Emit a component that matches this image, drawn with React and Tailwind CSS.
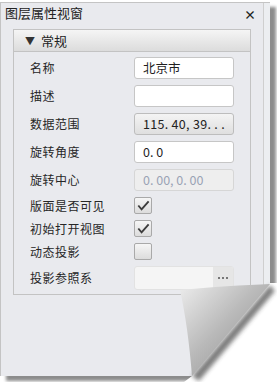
import React from 'react';

const font = "font-['Microsoft_YaHei','Noto_Sans_CJK_SC','Noto_Sans',sans-serif]";

// checkbox tick
const Tick = () => (
  <svg viewBox="0 0 17 17" className="w-[17px] h-[17px]">
    <path d="M3.5 8.5 L7 12.5 L14.5 4" fill="none" stroke="#3d3d3d" strokeWidth="2" />
  </svg>
);

const CheckBox = ({ checked }) => (
  <div className="w-[18px] h-[17px] rounded-[2px] border border-[#a9a9a9] bg-gradient-to-b from-[#f6f6f6] to-[#dcdcdc] flex items-center justify-center">
    {checked && <Tick />}
  </div>
);

const Row = ({ label, className, children }) => (
  <div className={`flex items-center ${className}`}>
    <div className="w-[120px] shrink-0 pl-[16px] text-[12px] tracking-[0.5px] text-[#262626]">{label}</div>
    {children}
  </div>
);

const TextBox = ({ value }) => (
  <div className="w-[100px] h-[22px] rounded-[3px] border border-[#c6c6c6] bg-white pl-[8px] flex items-center text-[12.5px] text-[#1f1f1f]">
    {value}
  </div>
);

// page curl at the bottom-right corner
const Curl = () => (
  <svg className="absolute left-[175px] top-[278px] w-[102px] h-[104px]" viewBox="175 278 102 104">
    <defs>
      <linearGradient id="curlFill" x1="0" y1="0" x2="1" y2="1">
        <stop offset="0" stopColor="#ededed" />
        <stop offset="0.45" stopColor="#bababa" />
        <stop offset="1" stopColor="#888888" />
      </linearGradient>
      <filter id="blur" x="-20%" y="-20%" width="140%" height="140%">
        <feGaussianBlur stdDeviation="2" />
      </filter>
    </defs>
    <path d="M270 283 L277 283 L277 382 L184 382 L192 376 Z" fill="#ffffff" />
    <path d="M270 285 L275 291 L199 381 L192 376 Z" fill="#3a3a3a" opacity="0.65" filter="url(#blur)" />
    <path d="M180 290 C210 287 245 285 270 284 L192 376 Q188 326 180 290 Z" fill="url(#curlFill)" />
  </svg>
);

const App = () => {
  return (
    <div className={`relative w-[277px] h-[382px] bg-white ${font}`}>
      <div className="absolute left-0 top-[2px] w-[270px] h-[374px] flex bg-[#e9eaee] border-t border-l border-[#c4c4c4] shadow-[6px_5px_3px_rgba(0,0,0,0.45)]">
        <div className="w-[263px] h-full border-r border-[#cfcfcf]">
          {/* title */}
          <div className="h-[20px] flex items-center justify-between pl-[4px] pr-[7px]">
            <span className="text-[13px] text-[#222]">图层属性视窗</span>
            <span className="text-[12px] font-bold text-[#222] leading-none mt-[4px]">×</span>
          </div>

          {/* group */}
          <div className="mt-[6px] ml-[12px] w-[238px] border border-[#c3c3c3]">
            <div className="h-[22px] flex items-center pl-[11px] bg-gradient-to-b from-[#f5f5f5] to-[#dcdcdc] border-b border-[#c3c3c3]">
              <span className="text-[10px] text-[#333] mr-[6px]">▼</span>
              <span className="text-[13px] text-[#222]">常规</span>
            </div>
            <div className="pt-[5px] pb-[4px] flex flex-col">
              <Row label="名称" className="h-[22px]">
                <TextBox value="北京市" />
              </Row>
              <Row label="描述" className="h-[22px] mt-[6px]">
                <TextBox value="" />
              </Row>
              <Row label="数据范围" className="h-[22px] mt-[6px]">
                <div className="w-[100px] h-[22px] rounded-[3px] border border-[#bdbdbd] bg-gradient-to-b from-[#f4f4f4] to-[#dfdfdf] pl-[8px] flex items-center text-[12.5px] tracking-[0.3px] text-[#222]">
                  115. 40, 39. . .
                </div>
              </Row>
              <Row label="旋转角度" className="h-[22px] mt-[6px]">
                <TextBox value="0. 0" />
              </Row>
              <Row label="旋转中心" className="h-[22px] mt-[6px]">
                <div className="w-[100px] h-[22px] rounded-[3px] border border-[#d6d6d6] bg-[#eeeeee] pl-[8px] flex items-center text-[12.5px] text-[#9aa3b5]">
                  0. 00, 0. 00
                </div>
              </Row>
              <Row label="版面是否可见" className="h-[17px] mt-[6px]">
                <CheckBox checked />
              </Row>
              <Row label="初始打开视图" className="h-[17px] mt-[6px]">
                <CheckBox checked />
              </Row>
              <Row label="动态投影" className="h-[17px] mt-[6px]">
                <CheckBox />
              </Row>
              <Row label="投影参照系" className="h-[24px] mt-[6px]">
                <div className="w-[100px] h-[24px] rounded-[3px] border border-[#e2e2e2] bg-[#f5f5f5] flex overflow-hidden">
                  <div className="flex-1" />
                  <div className="w-[20px] h-full bg-[#e6e6e6] flex items-center justify-center gap-[2px]">
                    <span className="w-[2px] h-[2px] bg-[#777]" />
                    <span className="w-[2px] h-[2px] bg-[#777]" />
                    <span className="w-[2px] h-[2px] bg-[#777]" />
                  </div>
                </div>
              </Row>
            </div>
          </div>
        </div>
        <div className="flex-1 bg-[#eceef1]" />
      </div>
      <Curl />
    </div>
  );
};

export default App;
